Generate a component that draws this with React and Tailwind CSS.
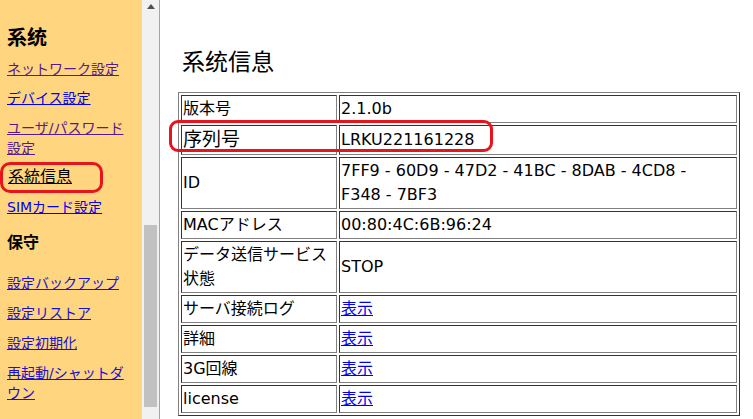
import React from "react";

const font = { fontFamily: '"DejaVu Sans", "Noto Sans CJK JP", sans-serif' };

function Cell({ children, className = "" }) {
  return (
    <div
      className={
        "flex items-center border border-t-[#343434] border-l-[#343434] border-b-[#808080] border-r-[#808080] p-[1px] text-[16px] leading-[24px] text-black " +
        className
      }
    >
      <div>{children}</div>
    </div>
  );
}

function Link({ children }) {
  return <a className="text-[#0000ee] underline cursor-pointer">{children}</a>;
}

export default function App() {
  return (
    <div
      className="relative flex h-[419px] w-[753px] overflow-hidden bg-white"
      style={font}
    >
      {/* Sidebar frame */}
      <aside className="w-[142px] shrink-0 bg-[#ffd57f] pl-[7px] pr-[10px] pt-[24px]">
        <h3 className="text-[20px] font-bold leading-[28px] text-black">系统</h3>
        <ul className="mt-[6.5px] flex flex-col gap-[9.5px] text-[14px] leading-[20px]">
          <li><a className="text-[#551a8b] underline">ネットワーク設定</a></li>
          <li><a className="text-[#0000ee] underline">デバイス設定</a></li>
          <li><a className="text-[#551a8b] underline">ユーザ/パスワード設定</a></li>
          <li className="pl-[1px]"><span className="text-[16px] text-black underline decoration-black">系統信息</span></li>
          <li><a className="text-[#0000ee] underline">SIMカード設定</a></li>
        </ul>
        <h3 className="mt-[14px] text-[16px] font-bold leading-[24px] text-black">保守</h3>
        <ul className="mt-[18px] flex flex-col gap-[10px] text-[14px] leading-[20px]">
          <li><a className="text-[#1a0fd0] underline">設定バックアップ</a></li>
          <li><a className="text-[#1a0fd0] underline">設定リストア</a></li>
          <li><a className="text-[#1a0fd0] underline">設定初期化</a></li>
          <li><a className="text-[#1a0fd0] underline">再起動/シャットダウン</a></li>
        </ul>
      </aside>

      {/* Sidebar scrollbar */}
      <div className="flex w-[17px] shrink-0 flex-col items-center bg-[#f1f1f1]">
        <svg width="8" height="5" viewBox="0 0 8 5" className="mt-[4px]">
          <polygon points="0,5 8,5 4,0" fill="#505050" />
        </svg>
        <div className="mt-[216px] h-[182px] w-[13px] bg-[#c1c1c1]" />
      </div>
      <div className="w-[1px] shrink-0 bg-[#a6a6a6]" />

      {/* Main frame */}
      <main className="flex-1 pl-[18px] pt-[46px]">
        <h2 className="ml-[4px] text-[23px] font-normal leading-[32px] text-black">系统信息</h2>
        <div className="mt-[14px] w-[562px] border border-t-[#808080] border-l-[#808080] border-b-[#343434] border-r-[#343434] p-[2px]">
          <div className="grid grid-cols-[156px_398px] gap-[2px]">
            <Cell>版本号</Cell>
            <Cell>2.1.0b</Cell>

            <Cell><span className="text-[19px]">序列号</span></Cell>
            <Cell>LRKU221161228</Cell>

            <Cell>ID</Cell>
            <Cell>
              7FF9 - 60D9 - 47D2 - 41BC - 8DAB - 4CD8 -<br />F348 - 7BF3
            </Cell>

            <Cell>MACアドレス</Cell>
            <Cell>00:80:4C:6B:96:24</Cell>

            <Cell>データ送信サービス状態</Cell>
            <Cell>STOP</Cell>

            <Cell>サーバ接続ログ</Cell>
            <Cell><Link>表示</Link></Cell>

            <Cell>詳細</Cell>
            <Cell><Link>表示</Link></Cell>

            <Cell>3G回線</Cell>
            <Cell><Link>表示</Link></Cell>

            <Cell>license</Cell>
            <Cell><Link>表示</Link></Cell>
          </div>
        </div>
      </main>

      {/* Red annotation marks */}
      <div className="pointer-events-none absolute left-[0px] top-[162px] h-[31px] w-[103px] rounded-[10px] border-[3px] border-[#e8141c]" />
      <div className="pointer-events-none absolute left-[169px] top-[120px] h-[32px] w-[324px] rounded-[9px] border-[3px] border-[#e8141c]" />
    </div>
  );
}
